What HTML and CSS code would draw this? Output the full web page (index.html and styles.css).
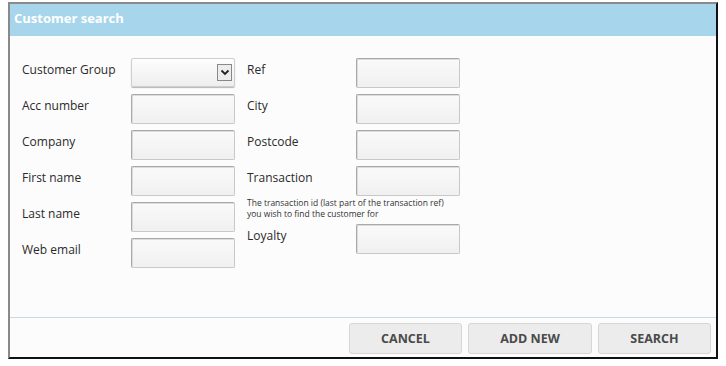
FILE: index.html
```html
<!DOCTYPE html>
<html>
<head>
<meta charset="utf-8">
<link rel="stylesheet" href="styles.css">
</head>
<body>
<div class="dialog">
  <div class="header">Customer search</div>
  <div class="content">
    <div class="col">
      <div class="row"><label>Customer Group</label>
        <div class="select"><span class="arrow"><svg width="10" height="7" viewBox="0 0 10 7"><path d="M1.5 1.5 L5 5 L8.5 1.5" fill="none" stroke="#222" stroke-width="1.8"/></svg></span></div>
      </div>
      <div class="row"><label>Acc number</label><div class="input"></div></div>
      <div class="row"><label>Company</label><div class="input"></div></div>
      <div class="row"><label>First name</label><div class="input"></div></div>
      <div class="row"><label>Last name</label><div class="input"></div></div>
      <div class="row"><label>Web email</label><div class="input"></div></div>
    </div>
    <div class="col">
      <div class="row"><label>Ref</label><div class="input"></div></div>
      <div class="row"><label>City</label><div class="input"></div></div>
      <div class="row"><label>Postcode</label><div class="input"></div></div>
      <div class="row"><label>Transaction</label><div class="input"></div></div>
      <div class="help">The transaction id (last part of the transaction ref)<br>you wish to find the customer for</div>
      <div class="row"><label>Loyalty</label><div class="input"></div></div>
    </div>
  </div>
  <div class="footer">
    <button class="btn b1">CANCEL</button>
    <button class="btn b2">ADD NEW</button>
    <button class="btn b3">SEARCH</button>
  </div>
</div>
</body>
</html>
```
FILE: styles.css
```css
html, body { margin: 0; padding: 0; background: #fff; }
body { font-family: "Open Sans", "DejaVu Sans", sans-serif; }
.dialog {
  margin: 2px 0 0 8px;
  width: 706px;
  height: 353px;
  border-left: 2px solid #8a8a8a;
  border-top: 2px solid #8a8a8a;
  border-right: 2px solid #111;
  border-bottom: 2px solid #111;
  background: #fcfcfc;
  display: flex;
  flex-direction: column;
}
.header {
  background: #a7d5eb;
  color: #fff;
  font-weight: bold;
  font-size: 13px;
  line-height: 16px;
  height: 32px;
  box-sizing: border-box;
  padding: 6px 4px 10px 4px;
}
.content {
  flex: 1;
  display: flex;
  gap: 12px;
  padding: 22px 0 0 12px;
}
.col { display: flex; flex-direction: column; gap: 6px; }
.row { display: flex; height: 30px; }
.row label {
  width: 109px;
  font-size: 12px;
  line-height: 14px;
  padding-top: 5px;
  color: #2a2a2a;
}
.input, .select {
  width: 104px;
  height: 30px;
  box-sizing: border-box;
  border: 1px solid #c8c8c8;
  border-top-color: #a9a9a9;
  border-left-color: #a9a9a9;
  border-radius: 2px;
  background: linear-gradient(#fafafa, #f0f0f0);
  box-shadow: inset 1px 1px 0 #dcdcdc;
}
.select {
  position: relative;
  border: 1px solid #cfcfcf;
  box-shadow: 0 1px 1px #b5b5b5;
  background: linear-gradient(#fdfdfd, #eeeeee);
  height: 29px;
}
.arrow {
  position: absolute;
  right: 2px;
  top: 5px;
  width: 15px;
  height: 17px;
  box-sizing: border-box;
  border: 1px solid #888;
  background: #ececec;
  display: flex;
  align-items: center;
  justify-content: center;
}
.help {
  font-size: 8.5px;
  line-height: 11px;
  color: #333;
  margin-top: -5px;
  margin-bottom: -1px;
}
.footer {
  height: 34px;
  border-top: 1px solid #c5dbe9;
  display: flex;
  justify-content: flex-end;
  align-items: flex-start;
  padding: 5px 5px 0 0;
  gap: 6px;
}
.btn {
  height: 31px;
  border: 1px solid #d6d6d6;
  border-radius: 3px;
  background: #ececec;
  color: #4a4a4a;
  font-family: "Open Sans", "DejaVu Sans", sans-serif;
  font-weight: bold;
  font-size: 12.5px;
  padding: 0;
}
.b1 { width: 113px; }
.b2 { width: 124px; }
.b3 { width: 113px; }
```
